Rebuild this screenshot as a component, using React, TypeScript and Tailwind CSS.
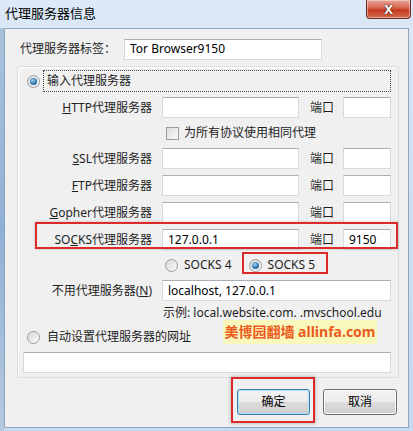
import React from "react";

const font = "font-['Noto_Sans','Noto_Sans_CJK_SC',sans-serif]";

function Input({ className = "", value = "" }: { className?: string; value?: string }) {
  return (
    <div
      className={`h-[21px] bg-white border border-[#d5d9e0] border-t-[#abadb3] flex items-center px-[5px] text-[12px] text-black ${className}`}
    >
      {value}
    </div>
  );
}

function Radio({ checked = false }: { checked?: boolean }) {
  return (
    <div className="w-[13px] h-[13px] rounded-full border border-[#9a9b9c] bg-[linear-gradient(135deg,#d8d8d8,#fbfbfb)] flex items-center justify-center shrink-0">
      {checked && (
        <div className="w-[7px] h-[7px] rounded-full bg-[radial-gradient(circle_at_40%_35%,#9ad2f5,#2a6ea8_60%,#1c4f7e)]" />
      )}
    </div>
  );
}

function Row({ label, mt, port = "", value = "" }: { label: React.ReactNode; mt: string; port?: string; value?: string }) {
  return (
    <div className={`flex items-center h-[21px] ${mt}`}>
      <div className="w-[134px] text-right text-[12px] text-[#1e1e1e] leading-none">{label}</div>
      <Input className="ml-[10px] w-[137px]" value={value} />
      <div className="ml-[11px] text-[12px] text-[#1e1e1e] w-[24px]">端口</div>
      <Input className="ml-[9px] w-[48px]" value={port} />
    </div>
  );
}

export default function App() {
  return (
    <div className={`relative w-[413px] h-[431px] overflow-hidden bg-[linear-gradient(180deg,#dce9f7,#cfe0f2_30%,#c5d9ef)] ${font}`}>
      {/* title bar */}
      <div className="h-[28px] flex items-center pl-[5px] text-[13px] text-black relative">
        <span className="-mt-[1px]">代理服务器信息</span>
        <div className="absolute right-[2px] top-0 w-[45px] h-[19px] rounded-b-[4px] border border-[#6b2a22] border-t-0 bg-[linear-gradient(180deg,#e8a493,#d7634f_45%,#c2381f_55%,#d86a4f)] flex items-center justify-center shadow-[inset_0_0_0_1px_rgba(255,255,255,0.4)]">
          <span className="text-white font-bold text-[13px] leading-none [text-shadow:0_0_2px_#4a1a10,0_0_1px_#4a1a10]">X</span>
        </div>
      </div>
      {/* left frame shading */}
      <div className="absolute left-0 top-[28px] w-[4px] h-[403px] bg-[linear-gradient(180deg,#a9c2dd,#8fb0d6_50%,#b5c9e0)]" />

      {/* panel */}
      <div className="ml-[4px] w-[405px] h-[400px] border border-[#8fa5bc] bg-[#f0f0f0]">
        <div className="flex items-center mt-[10px] h-[20px]">
          <div className="ml-[15px] w-[104px] text-[12px] text-[#1e1e1e]">代理服务器标签：</div>
          <Input className="h-[20px] w-[198px]" value="Tor Browser9150" />
        </div>

        {/* group box */}
        <div className="ml-[12px] mt-[7px] w-[382px] h-[312px] border border-[#d5dfe5] rounded-[3px] shadow-[inset_1px_1px_0_#fff]">
          {/* radio row */}
          <div className="flex items-center h-[22px] mt-[3px]">
            <div className="ml-[9px]"><Radio checked /></div>
            <div className="ml-[3px] w-[348px] h-[22px] border border-dotted border-[#444] flex items-center pl-[3px] text-[12px] text-[#1e1e1e]">
              输入代理服务器
            </div>
          </div>

          <Row mt="mt-[5px]" label={<><u>H</u>TTP代理服务器</>} />

          <div className="flex items-center h-[16px] mt-[7px]">
            <div className="ml-[148px] w-[13px] h-[13px] border border-[#9a9b9c] bg-[linear-gradient(135deg,#dcdcdc,#fafafa)]" />
            <div className="ml-[5px] text-[12px] text-[#1e1e1e]">为所有协议使用相同代理</div>
          </div>

          <Row mt="mt-[7px]" label={<><u>S</u>SL代理服务器</>} />
          <Row mt="mt-[6px]" label={<><u>F</u>TP代理服务器</>} />
          <Row mt="mt-[6px]" label={<><u>G</u>opher代理服务器</>} />
          <Row mt="mt-[6px]" label={<>SO<u>C</u>KS代理服务器</>} value="127.0.0.1" port="9150" />

          <div className="flex items-center h-[20px] mt-[5px] text-[12px] text-[#1e1e1e]">
            <div className="ml-[147px]"><Radio /></div>
            <div className="ml-[6px]">SOCKS 4</div>
            <div className="ml-[17px]"><Radio checked /></div>
            <div className="ml-[6px]">SOCKS 5</div>
          </div>

          <div className="flex items-center h-[21px] mt-[5px]">
            <div className="w-[134px] text-right text-[12px] text-[#1e1e1e]">不用代理服务器(<u>N</u>)</div>
            <Input className="ml-[10px] w-[229px]" value="localhost, 127.0.0.1" />
          </div>

          <div className="flex items-center h-[16px] mt-[4px] ml-[145px] text-[12px] text-[#1e1e1e]">
            示例: local.website.com. .mvschool.edu
          </div>

          <div className="flex items-center h-[16px] mt-[8px]">
            <div className="ml-[9px]"><Radio /></div>
            <div className="ml-[7px] text-[12px] text-[#1e1e1e]">自动设置代理服务器的网址</div>
          </div>

          <Input className="ml-[5px] mt-[7px] w-[368px]" />
        </div>

        {/* buttons */}
        <div className="flex mt-[11px]">
          <div className="ml-[232px] w-[73px] h-[26px] rounded-[3px] border border-[#3c7fb1] bg-[linear-gradient(180deg,#f2f2f2,#ebebeb_50%,#dddddd_50%,#cfcfcf)] shadow-[inset_0_0_0_1px_#aee0f8] flex items-center justify-center text-[12px] text-black">
            确定
          </div>
          <div className="ml-[13px] w-[74px] h-[26px] rounded-[3px] border border-[#707070] bg-[linear-gradient(180deg,#f2f2f2,#ebebeb_50%,#dddddd_50%,#cfcfcf)] shadow-[inset_0_0_0_1px_#fcfcfc] flex items-center justify-center text-[12px] text-black">
            取消
          </div>
        </div>
      </div>

      {/* annotation overlays */}
      <div className="absolute left-[35px] top-[222px] w-[363px] h-[27px] border-2 border-[#dc2a2a] shadow-[0_0_3px_rgba(0,0,0,0.2)]" />
      <div className="absolute left-[242px] top-[252px] w-[86px] h-[22px] border-2 border-[#dc2a2a]" />
      <div className="absolute left-[231px] top-[377px] w-[84px] h-[46px] border-2 border-[#dc2a2a] shadow-[0_0_4px_rgba(0,0,0,0.3)]" />
      <div className="absolute left-[223px] top-[320px] w-[154px] h-[24px] bg-[#fdf9b0]/80 rounded-[3px] flex items-center justify-center">
        <span className="text-[14px] leading-none font-bold text-[#ea5a1c]">美博园翻墙 allinfa.com</span>
      </div>
    </div>
  );
}
